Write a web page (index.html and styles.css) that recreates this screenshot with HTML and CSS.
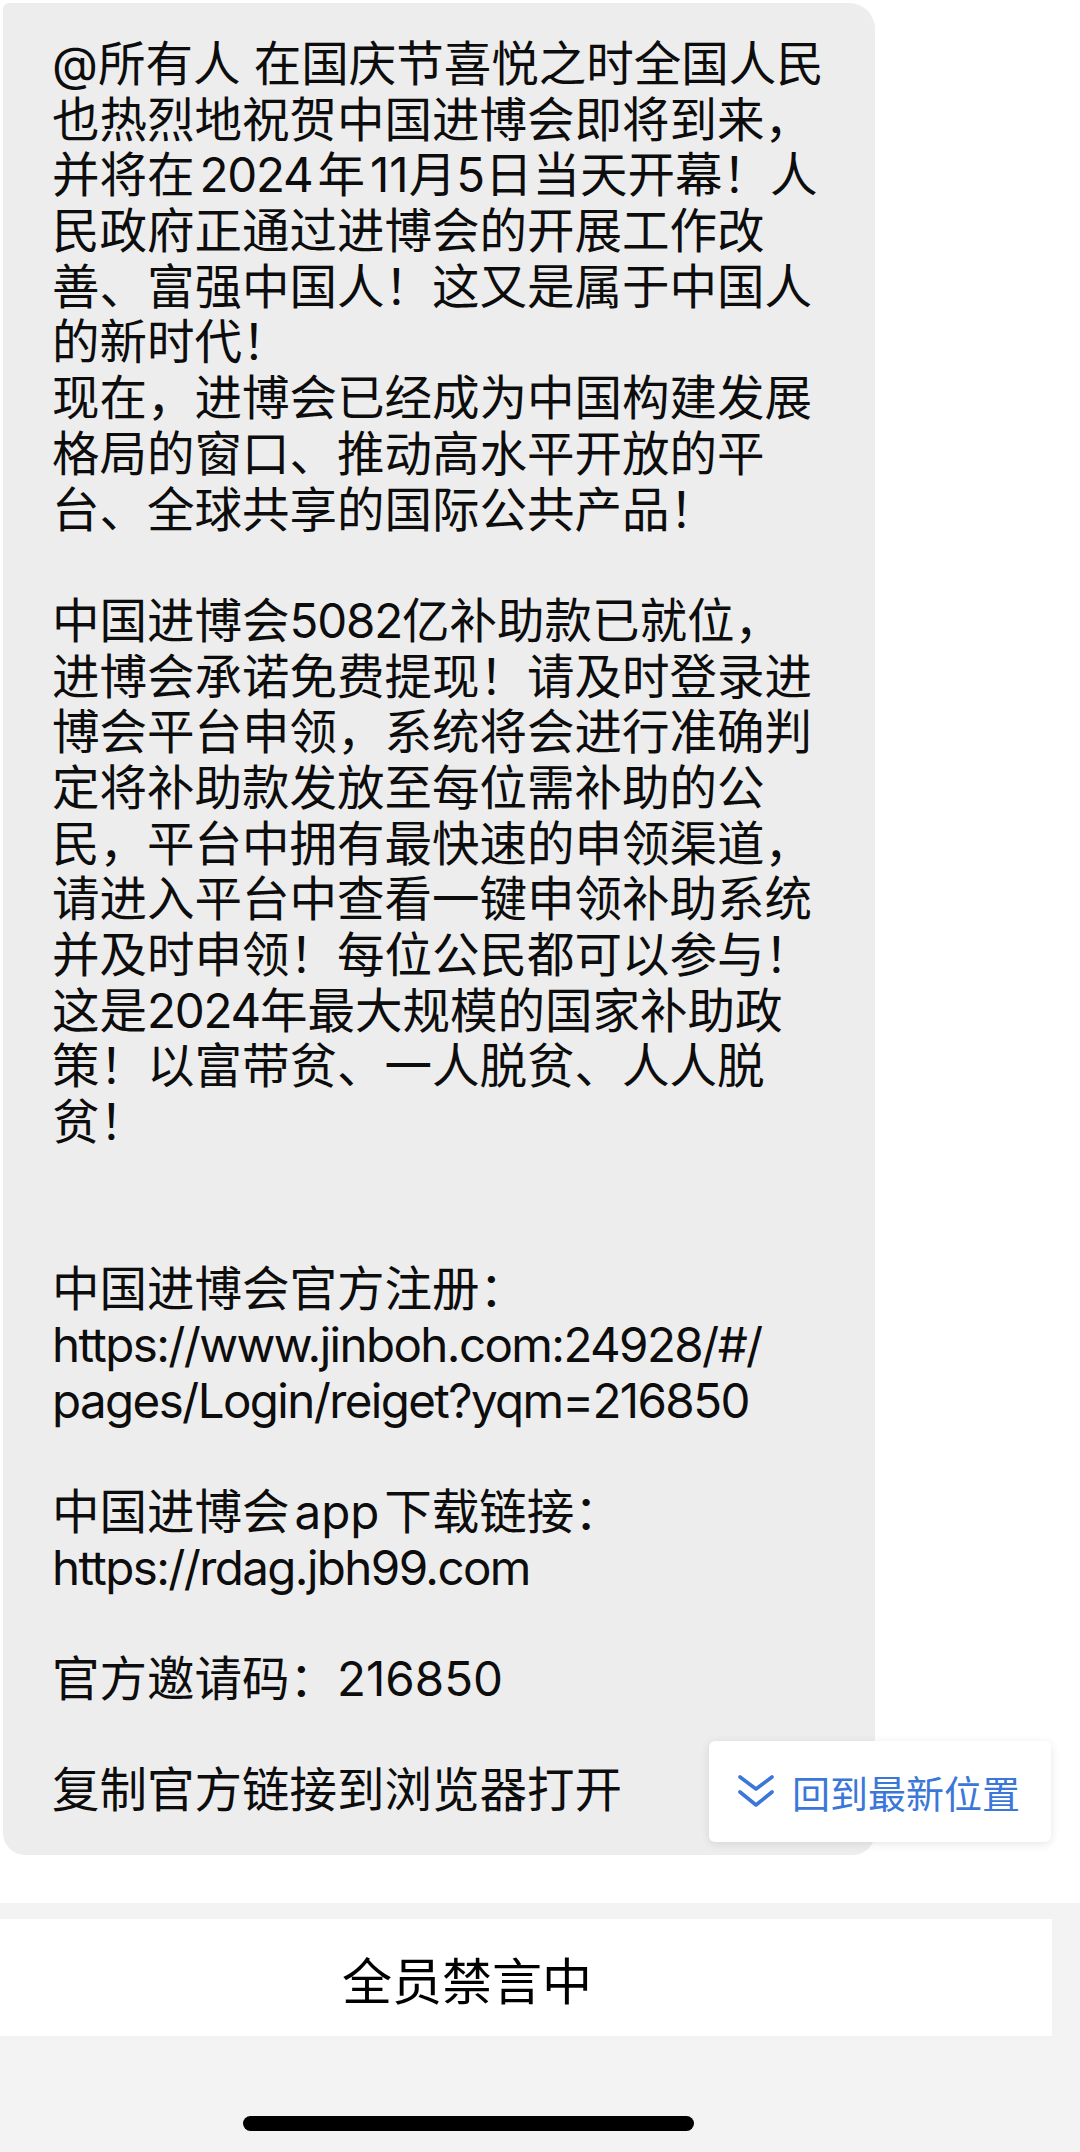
FILE: index.html
```html
<!DOCTYPE html>
<html lang="zh-CN">
<head>
<meta charset="utf-8">
<title>群聊</title>
<link rel="stylesheet" href="styles.css">
</head>
<body>
<div class="screen">
  <div class="chat">
    <div class="bubble">
      <span class="ln">@所有人 在国庆节喜悦之时全国人民</span>
      <span class="ln">也热烈地祝贺中国进博会即将到来，</span>
      <span class="ln">并将在<span class="num gap">2024</span>年<span class="gapl">11</span>月5日当天开幕！人</span>
      <span class="ln">民政府正通过进博会的开展工作改</span>
      <span class="ln">善、富强中国人！这又是属于中国人</span>
      <span class="ln">的新时代！</span>
      <span class="ln">现在，进博会已经成为中国构建发展</span>
      <span class="ln">格局的窗口、推动高水平开放的平</span>
      <span class="ln">台、全球共享的国际公共产品！</span>
      <span class="ln blank"></span>
      <span class="ln">中国进博会<span class="num">5082</span>亿补助款已就位，</span>
      <span class="ln">进博会承诺免费提现！请及时登录进</span>
      <span class="ln">博会平台申领，系统将会进行准确判</span>
      <span class="ln">定将补助款发放至每位需补助的公</span>
      <span class="ln">民，平台中拥有最快速的申领渠道，</span>
      <span class="ln">请进入平台中查看一键申领补助系统</span>
      <span class="ln">并及时申领！每位公民都可以参与！</span>
      <span class="ln">这是<span class="num">2024</span>年最大规模的国家补助政</span>
      <span class="ln">策！以富带贫、一人脱贫、人人脱</span>
      <span class="ln">贫！</span>
      <span class="ln blank"></span>
      <span class="ln blank"></span>
      <span class="ln">中国进博会官方注册：</span>
      <span class="ln url">https://www.jinboh.com:24928/#/</span>
      <span class="ln url">pages/Login/reiget?yqm=216850</span>
      <span class="ln blank"></span>
      <span class="ln">中国进博会<span class="gap">app</span>下载链接：</span>
      <span class="ln url">https://rdag.jbh99.com</span>
      <span class="ln blank"></span>
      <span class="ln">官方邀请码：216850</span>
      <span class="ln blank"></span>
      <span class="ln">复制官方链接到浏览器打开</span>
    </div>
    <div class="toast">
      <svg class="toast-icon" viewBox="0 0 36 34" width="36" height="34">
        <polyline points="2,2 18,14 34,2" fill="none" stroke="#3b77d8" stroke-width="3.6" stroke-linecap="round" stroke-linejoin="round"/>
        <polyline points="2,17 18,30 34,17" fill="none" stroke="#3b77d8" stroke-width="3.6" stroke-linecap="round" stroke-linejoin="round"/>
      </svg>
      <span class="toast-text">回到最新位置</span>
    </div>
  </div>
  <div class="footer">
    <div class="muted-bar">全员禁言中</div>
    <div class="home-indicator"></div>
  </div>
</div>
</body>
</html>
```

FILE: styles.css
```css
* { box-sizing: border-box; }
html, body {
  margin: 0;
  padding: 0;
  background: #ffffff;
}
body {
  width: 1080px;
  height: 2152px;
  overflow: hidden;
  font-family: Inter, "Noto Sans CJK SC", "Noto Sans", sans-serif;
  color: #0d0d0d;
}
.screen {
  width: 1080px;
  height: 2152px;
  display: flex;
  flex-direction: column;
}
.chat {
  position: relative;
  padding: 3px 0 0 3px;
  height: 1903px;
}
.bubble {
  width: 872px;
  background: #ededed;
  border-radius: 6px 26px 22px 22px;
  padding: 33px 0 37px 49px;
  font-size: 47.5px;
  line-height: 55.7px;
  display: flex;
  flex-direction: column;
}
.ln {
  display: block;
  white-space: nowrap;
  height: 55.7px;
}
.num {
  letter-spacing: -1.2px;
}
.gap {
  margin: 0 5px;
}
.gapl {
  margin-left: 5px;
}
.url {
  letter-spacing: -1.6px;
}
.toast {
  position: absolute;
  left: 709px;
  top: 1741px;
  width: 342px;
  height: 101px;
  background: #ffffff;
  border-radius: 6px;
  box-shadow: 0 2px 10px rgba(0, 0, 0, 0.10);
  display: flex;
  align-items: center;
  padding-left: 29px;
  gap: 18px;
}
.toast-icon {
  flex: none;
}
.toast-text {
  font-family: "Noto Sans CJK SC", sans-serif;
  font-size: 38px;
  color: #3b77d8;
  line-height: 1;
}
.footer {
  flex: 1;
  background: #f3f3f3;
  padding-top: 16px;
  display: flex;
  flex-direction: column;
}
.muted-bar {
  width: 1052px;
  height: 117px;
  background: #ffffff;
  display: flex;
  align-items: center;
  justify-content: center;
  padding-right: 118px;
  font-family: "Noto Sans CJK SC", sans-serif;
  font-size: 50px;
  color: #000000;
}
.home-indicator {
  width: 451px;
  height: 15px;
  border-radius: 8px;
  background: #000000;
  margin: 80px 0 0 243px;
}
```
